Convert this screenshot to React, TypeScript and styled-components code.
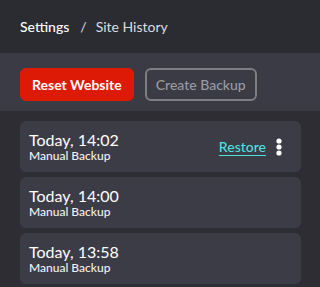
import styled, { createGlobalStyle } from 'styled-components';

// 페이지 전체 기본 스타일
const GlobalStyle = createGlobalStyle`
  html, body {
    margin: 0;
    padding: 0;
    background-color: #2d2d33;
  }
  body {
    font-family: Lato, 'Noto Sans', sans-serif;
  }
`;

interface Backup {
  time: string;
  kind: string;
}

const backups: Backup[] = [
  { time: 'Today, 14:02', kind: 'Manual Backup' },
  { time: 'Today, 14:00', kind: 'Manual Backup' },
  { time: 'Today, 13:58', kind: 'Manual Backup' },
];

const Page = styled.div`
  width: 320px;
  min-height: 287px;
  background-color: #2d2d33;
  display: flex;
  flex-direction: column;
`;

const Header = styled.header`
  height: 53px;
  display: flex;
  align-items: center;
  padding: 0 20px;
  background-color: #2b2c31;
  font-size: 14px;
  color: #ffffff;
`;

const Crumb = styled.span<{ $current?: boolean }>`
  font-weight: ${({ $current }) => ($current ? 400 : 500)};
  color: ${({ $current }) => ($current ? '#dcdce0' : '#ffffff')};
`;

const Slash = styled.span`
  margin: 0 9px 0 11px;
  color: #dcdce0;
`;

const Toolbar = styled.div`
  display: flex;
  gap: 11px;
  padding: 15px 20px 10px;
  background-color: #3b3b45;
`;

const Button = styled.button<{ $variant: 'danger' | 'outline' }>`
  height: 33px;
  box-sizing: border-box;
  padding: 0 ${({ $variant }) => ($variant === 'danger' ? 10 : 9)}px;
  border-radius: 6px;
  font-family: Lato, 'Noto Sans', sans-serif;
  font-size: 14px;
  font-weight: ${({ $variant }) => ($variant === 'danger' ? 700 : 500)};
  cursor: pointer;
  border: 2px solid
    ${({ $variant }) => ($variant === 'danger' ? '#dd1a06' : '#7d7d84')};
  background-color: ${({ $variant }) =>
    $variant === 'danger' ? '#dd1a06' : 'transparent'};
  color: ${({ $variant }) => ($variant === 'danger' ? '#ffffff' : '#9a9aa0')};
`;

const List = styled.div`
  display: flex;
  flex-direction: column;
  gap: 5px;
  padding: 10px 19px 4px 20px;
`;

const Card = styled.div`
  height: 51px;
  flex-shrink: 0;
  box-sizing: border-box;
  display: flex;
  align-items: center;
  padding: 0 19px 0 9px;
  border-radius: 6px;
  background-color: #3c3c46;
`;

const Info = styled.div`
  flex: 1;
  display: flex;
  flex-direction: column;
`;

const Time = styled.span`
  font-size: 16px;
  line-height: 19px;
  color: #ffffff;
`;

const Kind = styled.span`
  font-size: 12px;
  line-height: 14px;
  font-weight: 500;
  color: #f0f0f2;
`;

const RestoreLink = styled.a`
  font-size: 14px;
  font-weight: 500;
  color: #4fdfdc;
  text-decoration: underline;
  text-underline-offset: 3px;
  cursor: pointer;
`;

const MenuButton = styled.button`
  margin-left: 10px;
  padding: 0;
  border: none;
  background: none;
  display: flex;
  align-items: center;
`;

function Kebab() {
  return (
    <svg width="6" height="18" viewBox="0 0 6 18" fill="#ffffff">
      <circle cx="3" cy="3" r="2.6" />
      <circle cx="3" cy="9" r="2.6" />
      <circle cx="3" cy="15" r="2.6" />
    </svg>
  );
}

export default function App() {
  return (
    <>
      <GlobalStyle />
      <Page>
        <Header>
          <Crumb>Settings</Crumb>
          <Slash>/</Slash>
          <Crumb $current>Site History</Crumb>
        </Header>
        <Toolbar>
          <Button $variant="danger">Reset Website</Button>
          <Button $variant="outline">Create Backup</Button>
        </Toolbar>
        <List>
          {backups.map((b, i) => (
            <Card key={b.time}>
              <Info>
                <Time>{b.time}</Time>
                <Kind>{b.kind}</Kind>
              </Info>
              {i === 0 && (
                <>
                  <RestoreLink>Restore</RestoreLink>
                  <MenuButton aria-label="More">
                    <Kebab />
                  </MenuButton>
                </>
              )}
            </Card>
          ))}
        </List>
      </Page>
    </>
  );
}
